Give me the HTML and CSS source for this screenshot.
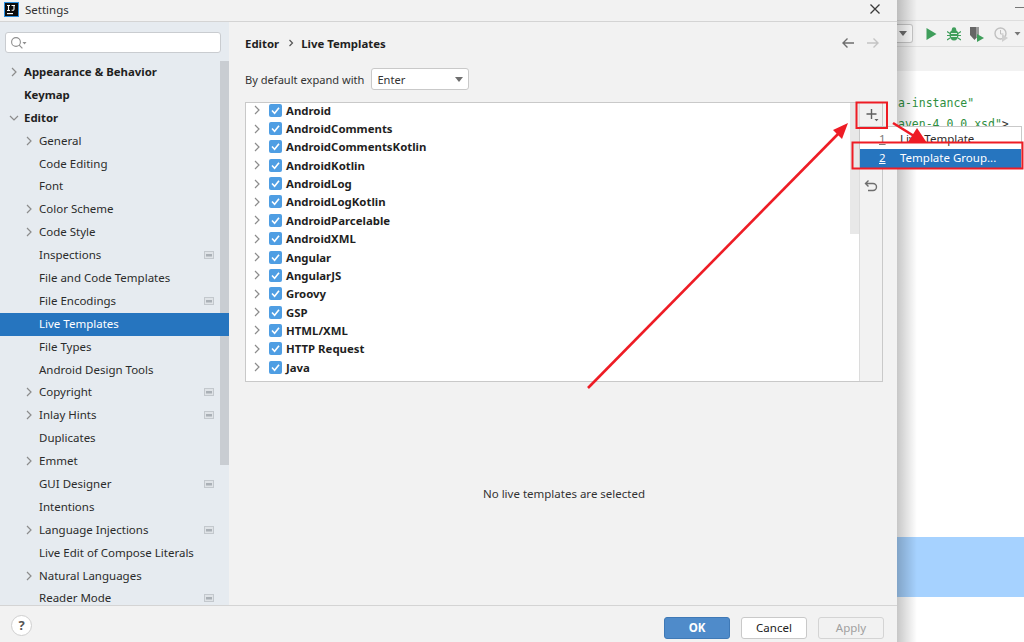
FILE: index.html
```html
<!DOCTYPE html>
<html lang="en">
<head>
<meta charset="utf-8">
<title>Settings</title>
<link rel="stylesheet" href="styles.css">
</head>
<body>
<svg class="symbols" width="0" height="0">
  <symbol id="caret-r" viewBox="0 0 10 10"><path d="M3 1l4 4-4 4" fill="none" stroke="#8c8c8c" stroke-width="1.2"/></symbol>
  <symbol id="caret-d" viewBox="0 0 10 10"><path d="M1 3l4 4 4-4" fill="none" stroke="#8c8c8c" stroke-width="1.2"/></symbol>
  <symbol id="badge" viewBox="0 0 10 10"><rect x="0" y="1" width="10" height="8" fill="#c3c8cd"/><rect x="1" y="2" width="8" height="6" fill="#dfe3e7"/><rect x="2" y="4" width="6" height="2.5" fill="#aab0b6"/></symbol>
  <symbol id="check" viewBox="0 0 13 13"><rect width="13" height="13" rx="2" fill="#4f9ee3"/><path d="M3 6.5l2.6 2.8L10 3.8" fill="none" stroke="#fff" stroke-width="1.6"/></symbol>
</svg>
<div class="screen">
  <main class="dialog">
    <header class="titlebar">
      <svg class="logo" width="15" height="15" viewBox="0 0 15 15"><rect width="15" height="15" fill="#2b8fe0"/><rect x="1" y="1" width="13" height="13" fill="#0c0c0c"/><rect x="3" y="11" width="6" height="1.2" fill="#fff"/><path d="M3 3.500h3M4.500 3.500v5M3 8.500h3M7.500 3.500h3.500M10 3.500v3.500c0 1.200-1 1.500-2.300 1" fill="none" stroke="#fff" stroke-width="1.100"/></svg>
      <span class="title">Settings</span>
      <svg class="close" width="12" height="12" viewBox="0 0 12 12"><path d="M1.500 1.500l9 9M10.500 1.500l-9 9" stroke="#3a3a3a" stroke-width="1.300"/></svg>
    </header>
    <div class="body">
      <nav class="sidebar">
        <div class="search">
          <svg width="18" height="14" viewBox="0 0 18 14"><circle cx="6" cy="6" r="4.400" fill="none" stroke="#8f8f8f" stroke-width="1.100"/><path d="M9.200 9.200l3.200 3.200" stroke="#8f8f8f" stroke-width="1.200"/><path d="M12.500 6h4l-2 2.400z" fill="#8f8f8f"/></svg>
        </div>
        <div class="thumb"></div>
        <ul class="nav">
          <li class="row strong"><svg class="caret"><use href="#caret-r"/></svg><span>Appearance &amp; Behavior</span></li>
          <li class="row strong"><span>Keymap</span></li>
          <li class="row strong"><svg class="caret"><use href="#caret-d"/></svg><span>Editor</span></li>
          <li class="row sub"><svg class="caret"><use href="#caret-r"/></svg><span>General</span></li>
          <li class="row sub"><span>Code Editing</span></li>
          <li class="row sub"><span>Font</span></li>
          <li class="row sub"><svg class="caret"><use href="#caret-r"/></svg><span>Color Scheme</span></li>
          <li class="row sub"><svg class="caret"><use href="#caret-r"/></svg><span>Code Style</span></li>
          <li class="row sub"><span>Inspections</span><svg class="badge"><use href="#badge"/></svg></li>
          <li class="row sub"><span>File and Code Templates</span></li>
          <li class="row sub"><span>File Encodings</span><svg class="badge"><use href="#badge"/></svg></li>
          <li class="row sub selected"><span>Live Templates</span></li>
          <li class="row sub"><span>File Types</span></li>
          <li class="row sub"><span>Android Design Tools</span></li>
          <li class="row sub"><svg class="caret"><use href="#caret-r"/></svg><span>Copyright</span><svg class="badge"><use href="#badge"/></svg></li>
          <li class="row sub"><svg class="caret"><use href="#caret-r"/></svg><span>Inlay Hints</span><svg class="badge"><use href="#badge"/></svg></li>
          <li class="row sub"><span>Duplicates</span></li>
          <li class="row sub"><svg class="caret"><use href="#caret-r"/></svg><span>Emmet</span></li>
          <li class="row sub"><span>GUI Designer</span><svg class="badge"><use href="#badge"/></svg></li>
          <li class="row sub"><span>Intentions</span></li>
          <li class="row sub"><svg class="caret"><use href="#caret-r"/></svg><span>Language Injections</span><svg class="badge"><use href="#badge"/></svg></li>
          <li class="row sub"><span>Live Edit of Compose Literals</span></li>
          <li class="row sub"><svg class="caret"><use href="#caret-r"/></svg><span>Natural Languages</span></li>
          <li class="row sub"><span>Reader Mode</span><svg class="badge"><use href="#badge"/></svg></li>
        </ul>
      </nav>
      <section class="content">
        <div class="crumbs">
          <span>Editor</span>
          <svg class="crumb-sep" width="8" height="8" viewBox="0 0 8 8"><path d="M2.500 1l3 3-3 3" fill="none" stroke="#555" stroke-width="1.200"/></svg>
          <span>Live Templates</span>
          <div class="history">
            <svg width="14" height="12" viewBox="0 0 14 12"><path d="M13 6H2M6.500 1.500L2 6l4.500 4.500" fill="none" stroke="#6e6e6e" stroke-width="1.400"/></svg>
            <svg width="14" height="12" viewBox="0 0 14 12"><path d="M1 6h11M7.500 1.500L12 6l-4.500 4.500" fill="none" stroke="#c4c4c4" stroke-width="1.400"/></svg>
          </div>
        </div>
        <div class="expand">
          <label>By default expand with</label>
          <div class="select"><span>Enter</span><i class="tri"></i></div>
        </div>
        <div class="panel">
          <div class="tree-wrap">
            <ul class="tree">
              <li><svg class="caret"><use href="#caret-r"/></svg><svg class="check"><use href="#check"/></svg><b>Android</b></li>
              <li><svg class="caret"><use href="#caret-r"/></svg><svg class="check"><use href="#check"/></svg><b>AndroidComments</b></li>
              <li><svg class="caret"><use href="#caret-r"/></svg><svg class="check"><use href="#check"/></svg><b>AndroidCommentsKotlin</b></li>
              <li><svg class="caret"><use href="#caret-r"/></svg><svg class="check"><use href="#check"/></svg><b>AndroidKotlin</b></li>
              <li><svg class="caret"><use href="#caret-r"/></svg><svg class="check"><use href="#check"/></svg><b>AndroidLog</b></li>
              <li><svg class="caret"><use href="#caret-r"/></svg><svg class="check"><use href="#check"/></svg><b>AndroidLogKotlin</b></li>
              <li><svg class="caret"><use href="#caret-r"/></svg><svg class="check"><use href="#check"/></svg><b>AndroidParcelable</b></li>
              <li><svg class="caret"><use href="#caret-r"/></svg><svg class="check"><use href="#check"/></svg><b>AndroidXML</b></li>
              <li><svg class="caret"><use href="#caret-r"/></svg><svg class="check"><use href="#check"/></svg><b>Angular</b></li>
              <li><svg class="caret"><use href="#caret-r"/></svg><svg class="check"><use href="#check"/></svg><b>AngularJS</b></li>
              <li><svg class="caret"><use href="#caret-r"/></svg><svg class="check"><use href="#check"/></svg><b>Groovy</b></li>
              <li><svg class="caret"><use href="#caret-r"/></svg><svg class="check"><use href="#check"/></svg><b>GSP</b></li>
              <li><svg class="caret"><use href="#caret-r"/></svg><svg class="check"><use href="#check"/></svg><b>HTML/XML</b></li>
              <li><svg class="caret"><use href="#caret-r"/></svg><svg class="check"><use href="#check"/></svg><b>HTTP Request</b></li>
              <li><svg class="caret"><use href="#caret-r"/></svg><svg class="check"><use href="#check"/></svg><b>Java</b></li>
            </ul>
            <div class="tree-thumb"></div>
          </div>
          <div class="tools">
            <svg class="tool-add" width="16" height="16" viewBox="0 0 16 16"><path d="M8.500 2v10M3.500 7h10" stroke="#5f5f5f" stroke-width="1.400"/><path d="M11.500 12h4l-2 2.300z" fill="#5f5f5f"/></svg>
            <svg class="tool-undo" width="14" height="14" viewBox="0 0 14 14"><path d="M4.500 1.500L1.500 4.500l3 3M1.500 4.500H9a3.500 3.500 0 0 1 0 7H4" fill="none" stroke="#6e6e6e" stroke-width="1.400"/></svg>
          </div>
        </div>
        <p class="empty">No live templates are selected</p>
      </section>
    </div>
    <footer class="footer">
      <button class="help">?</button>
      <div class="actions">
        <button class="btn primary">OK</button>
        <button class="btn">Cancel</button>
        <button class="btn disabled">Apply</button>
      </div>
    </footer>
  </main>
  <aside class="ide">
    <div class="ide-top"><i class="ide-min"></i></div>
    <div class="ide-toolbar">
      <div class="ide-select"><i class="tri"></i></div>
      <svg class="ic-run" width="12" height="14" viewBox="0 0 12 14"><path d="M1.500 1l10 6-10 6z" fill="#3f9e5b"/></svg>
      <svg class="ic-bug" width="14" height="14" viewBox="0 0 14 14"><ellipse cx="7" cy="8" rx="4.500" ry="5.500" fill="#3f9e5b"/><circle cx="7" cy="2.500" r="2.200" fill="#3f9e5b"/><path d="M0 4.500l3 2M14 4.500l-3 2M0 8.500h3M14 8.500h-3M0 13l3-2M14 13l-3-2" stroke="#3f9e5b" stroke-width="1.200"/><path d="M4 6.500h6M4 9.500h6" stroke="#dfeee3"/></svg>
      <svg class="ic-cover" width="16" height="16" viewBox="0 0 16 16"><path d="M1 1h9v8l-4.500 5L1 9z" fill="#666"/><path d="M7 1h3v8l-3 3z" fill="#9a9a9a"/><path d="M8 8l7 4-7 4z" fill="#3f9e5b"/></svg>
      <svg class="ic-prof" width="28" height="16" viewBox="0 0 28 16"><circle cx="6.500" cy="7.500" r="5.500" fill="none" stroke="#c0c0c0" stroke-width="1.400"/><path d="M6.500 4v4h3" fill="none" stroke="#c0c0c0"/><path d="M8 8l6 4-6 4z" fill="#cfcfcf"/><path d="M20.500 6h6l-3 3.500z" fill="#777"/></svg>
    </div>
    <div class="ide-tabs"></div>
    <div class="ide-editor">
      <div class="code">a-instance"</div>
      <div class="code">aven-4.0.0.xsd"<em>&gt;</em></div>
      <div class="band"></div>
    </div>
    <div class="shade"></div>
  </aside>

  <div class="menu">
    <div class="menu-item"><u>1</u><span>Live Template</span></div>
    <div class="menu-item active"><u>2</u><span>Template Group...</span></div>
  </div>

  <svg class="marks" width="1024" height="642" viewBox="0 0 1024 642">
    <rect x="856.500" y="102.500" width="30.500" height="25.500" fill="none" stroke="#ee1c25" stroke-width="2"/>
    <rect x="852.500" y="142.500" width="170" height="26" fill="none" stroke="#ee1c25" stroke-width="2"/>
    <path d="M588 388L838 134" stroke="#ee1c25" stroke-width="2.600"/>
    <path d="M848 123L833 130 842 139z" fill="#ee1c25"/>
    <path d="M893 123L914 136" stroke="#ee1c25" stroke-width="2.600"/>
    <path d="M927 143L908 142 917 128z" fill="#ee1c25"/>
  </svg>
</div>
</body>
</html>
```

FILE: styles.css
```css
* { box-sizing: border-box; }
html, body { margin: 0; padding: 0; }
body { width: 1024px; height: 642px; overflow: hidden; font-family: "Noto Sans", "Liberation Sans", sans-serif; font-size: 11.500px; color: #1f1f1f; }
ul { list-style: none; margin: 0; padding: 0; }
.symbols { position: absolute; }
.screen { position: relative; display: flex; width: 1024px; height: 642px; overflow: hidden; background: #fff; }

.dialog { width: 897px; height: 642px; display: flex; flex-direction: column; background: #f2f2f2; flex: none; }
.titlebar { height: 22px; flex: none; display: flex; align-items: center; padding: 0 16px 3px 4px; border-bottom: 1px solid #d4d4d4; }
.logo { margin-right: 6px; flex: none; }
.title { font-size: 11.500px; color: #333; }
.close { margin-left: auto; }

.body { flex: 1; display: flex; min-height: 0; }
.sidebar { position: relative; width: 229px; flex: none; background: #e6ebf0; overflow: hidden; }
.search { height: 21px; margin: 10px 8px 8px 5px; background: #fff; border: 1px solid #c9ccd0; border-radius: 3px; display: flex; align-items: center; padding-left: 4px; }
.thumb { position: absolute; right: 0; top: 39px; width: 9px; height: 404px; background: #c9cdd2; }
.nav { position: relative; }
.row { position: relative; height: 22.900px; display: flex; align-items: center; padding-bottom: 2px; }
.row span { white-space: nowrap; }
.row.strong { padding-left: 24px; font-weight: 700; font-size: 11.400px; }
.row.sub { padding-left: 39px; color: #2b2b2b; }
.row .caret { position: absolute; top: 6px; width: 10px; height: 10px; }
.row.strong .caret { left: 9px; }
.row.sub .caret { left: 24px; }
.badge { position: absolute; left: 204px; top: 6px; width: 10px; height: 10px; }
.row.selected { background: #2675bf; color: #fff; }

.content { flex: 1; min-width: 0; display: flex; flex-direction: column; padding: 0 14px 0 16px; }
.crumbs { height: 42px; display: flex; align-items: center; gap: 8px; font-weight: 700; font-size: 11.400px; flex: none; }
.crumb-sep { margin-right: -2px; }
.history { margin-left: auto; margin-right: 3px; display: flex; gap: 11px; }
.expand { display: flex; align-items: center; gap: 7px; height: 24px; margin-top: 3px; flex: none; color: #333; font-size: 11.100px; }
.select { width: 98px; height: 22px; background: #fff; border: 1px solid #c9c9c9; border-radius: 3px; display: flex; align-items: center; justify-content: space-between; padding: 0 4px 0 5px; }
.tri { display: block; width: 0; height: 0; border-left: 4.500px solid transparent; border-right: 4.500px solid transparent; border-top: 5px solid #6e6e6e; }
.select .tri { margin-right: 1px; }

.panel { display: flex; height: 280px; margin-top: 11px; border: 1px solid #c9c9c9; flex: none; }
.tree-wrap { position: relative; flex: 1; background: #fff; overflow: hidden; }
.tree { margin-top: -2px; }
.tree li { height: 18.360px; display: flex; align-items: center; font-weight: 700; font-size: 11.400px; white-space: nowrap; padding-left: 6px; }
.tree .caret { width: 10px; height: 10px; flex: none; }
.tree .check { width: 13px; height: 13px; margin-left: 7px; margin-right: 4px; flex: none; }
.tree b { font-weight: 700; }
.tree-thumb { position: absolute; right: 0; top: 0; width: 9px; height: 131px; background: #e8e8e8; }
.tools { width: 23px; flex: none; display: flex; flex-direction: column; align-items: center; background: #f2f2f2; border-left: 1px solid #dcdcdc; }
.tool-add { margin-top: 4px; }
.tool-undo { margin-top: 56px; }
.empty { margin: 104px 0 0; text-align: center; color: #333; }

.footer { height: 37px; flex: none; border-top: 1px solid #d4d4d4; display: flex; align-items: center; padding: 0 13px 0 11px; }
button { font: inherit; }
.help { width: 21px; height: 21px; margin-top: 3px; border-radius: 50%; background: #fff; border: 1px solid #cfcfcf; font-weight: 700; padding: 0; color: #555; font-size: 13px; line-height: 1; }
.actions { margin-left: auto; display: flex; gap: 11px; margin-top: 7px; }
.btn { width: 66px; height: 22px; padding: 0; border: 1px solid #c9c9c9; border-radius: 3px; background: #fff; color: #222; line-height: 1; }
.btn.primary { background: #4f8bca; border-color: #3f79b6; color: #fff; font-weight: 700; }
.btn.disabled { background: #f2f2f2; color: #a0a0a0; border-color: #d4d4d4; }

.ide { position: relative; flex: 1; min-width: 0; display: flex; flex-direction: column; background: #f2f2f2; }
.ide-top { height: 21px; flex: none; border-bottom: 1px solid #dedede; display: flex; justify-content: flex-end; padding-top: 7px; }
.ide-min { display: block; width: 9px; height: 1px; background: #777; }
.ide-toolbar { height: 26px; flex: none; border-bottom: 1px solid #dedede; display: flex; align-items: center; }
.ide-select { width: 16px; height: 19px; margin-right: 12px; background: #fff; border: 1px solid #c9c9c9; border-left: 0; border-radius: 0 3px 3px 0; display: flex; align-items: center; padding-left: 2px; }
.ide-toolbar svg { flex: none; }
.ic-run { margin-right: 10px; }
.ic-bug { margin-right: 8px; }
.ic-cover { margin-right: 8.500px; }
.ide-tabs { height: 24px; flex: none; }
.ide-editor { flex: 1; position: relative; background: #fff; padding-top: 22px; }
.code { font-family: "DejaVu Sans Mono", "Liberation Mono", monospace; font-size: 11.500px; line-height: 21px; color: #2f8f3f; white-space: nowrap; padding-left: 1px; }
.code em { font-style: normal; color: #333; }
.band { position: absolute; left: 0; right: 0; top: 466px; height: 60px; background: #a6d2ff; }
.shade { position: absolute; left: 0; top: 0; bottom: 0; width: 20px; background: linear-gradient(to right, rgba(0,0,0,.22), rgba(0,0,0,0)); }

.menu { position: absolute; left: 859px; top: 126px; width: 163px; height: 42px; background: #fff; border: 1px solid #c9c9c9; padding-top: 3px; }
.menu-item { height: 19px; display: flex; align-items: center; padding: 0 0 2px 19px; color: #2b2b2b; }
.menu-item u { width: 21px; color: #7a7a7a; }
.menu-item.active { background: #2675bf; color: #fff; }
.menu-item.active u { color: #fff; }
.marks { position: absolute; left: 0; top: 0; pointer-events: none; }
```
